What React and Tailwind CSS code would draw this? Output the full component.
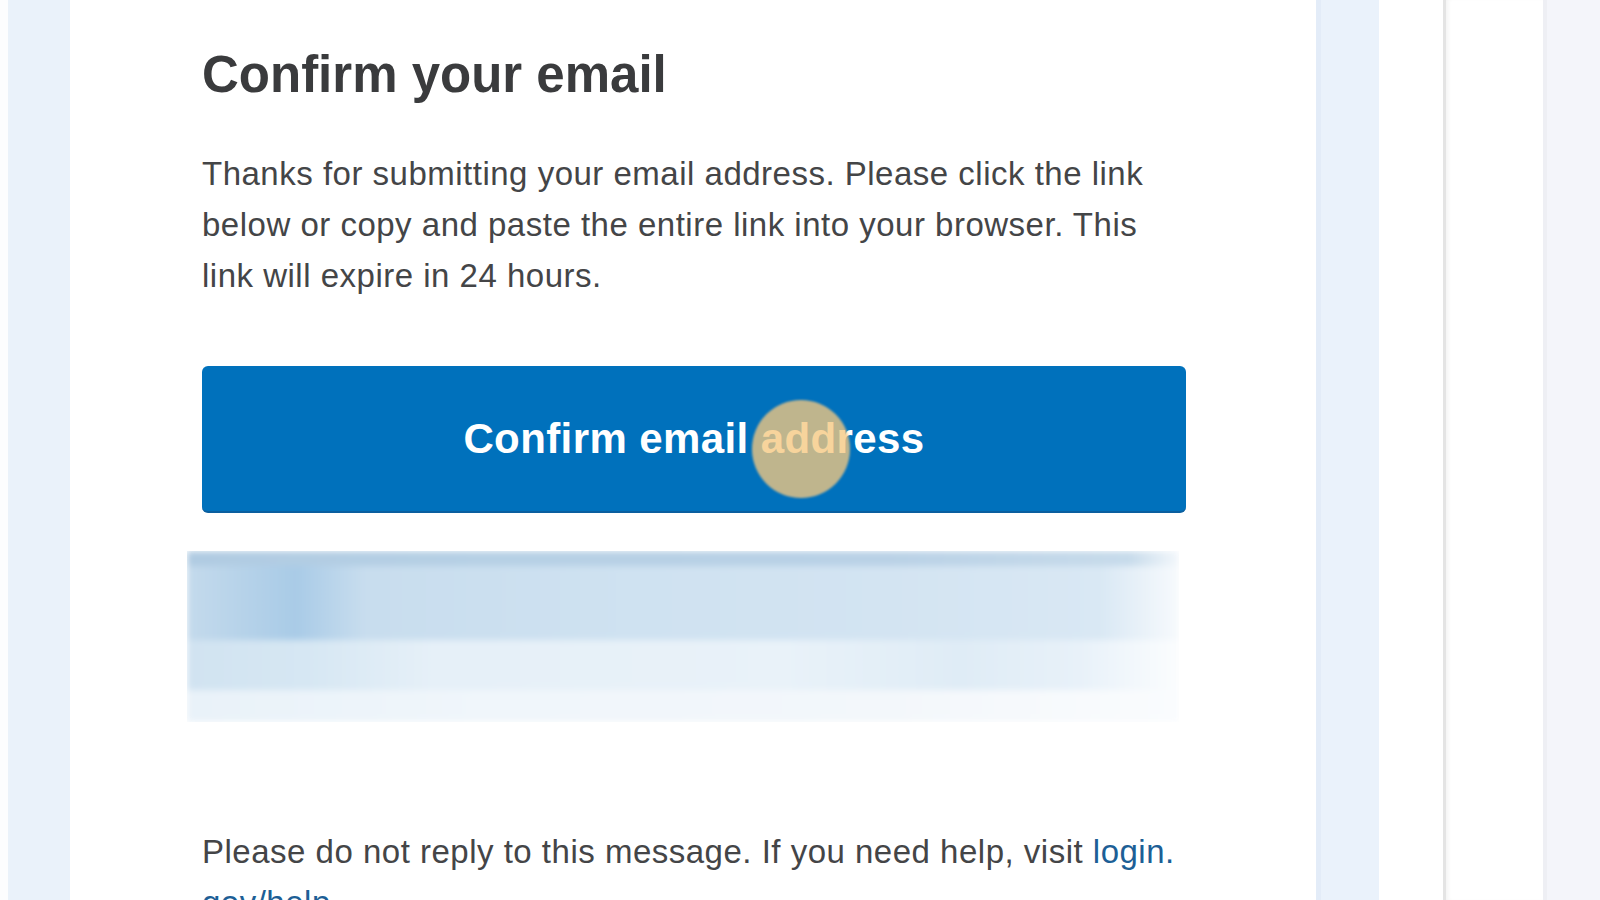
import React from "react";

const sans = "font-['Liberation_Sans',Arial,sans-serif]";

const Redacted = () => (
  <div className="w-[992px] h-[171px] -ml-[15px] mt-[38px] overflow-hidden">
    <div className="flex flex-col h-full blur-[3px]">
      <div className="h-[15px] bg-[linear-gradient(to_right,#b0cbe2,#b6d0e5_30%,#b9d1e6_70%,#c7dbeb_95%,#f4f8fc)]" />
      <div className="h-[74px] bg-[linear-gradient(to_right,#c4daec,#b0cfe8_8%,#a9cbe7_11%,#c8ddee_18%,#cfe2f1_45%,#d3e4f2_70%,#d9e8f4_92%,#f7fafd)]" />
      <div className="h-[50px] bg-[linear-gradient(to_right,#d1e3f1,#d6e7f3_12%,#e6f0f8_25%,#e9f2f9_60%,#dfecf6_78%,#e8f1f9_90%,#fbfdfe)]" />
      <div className="h-[32px] bg-[linear-gradient(to_right,#e9f2f9,#f0f6fb_30%,#f3f7fb_70%,#fafcfe)]" />
    </div>
  </div>
);

export default function App() {
  return (
    <div className={`flex h-[900px] w-[1600px] overflow-hidden bg-white ${sans}`}>
      <div className="w-[8px] bg-[#fcfdfe]" />
      <div className="w-[62px] bg-[#eaf2fa]" />

      {/* email card */}
      <div className="w-[1246px] bg-white pl-[132px] pt-[44px]">
        <div className="w-[985px]">
          <h1 className="text-[51px] leading-[61px] font-bold text-[#3a3b3d]">
            Confirm your email
          </h1>
          <p className="mt-[43px] text-[33px] leading-[51px] tracking-[0.5px] text-[#444547]">
            Thanks for submitting your email address. Please click the link
            below or copy and paste the entire link into your browser. This
            link will expire in 24 hours.
          </p>

          <div className="relative mt-[65px]">
            <button className="flex items-center justify-center w-[984px] h-[147px] rounded-[6px] bg-[#0071bc] border-b-2 border-[#0b5f9f] text-white text-[42px] font-bold tracking-[0.4px]">
              Confirm email address
            </button>
            {/* tap indicator */}
            <div className="absolute left-[550px] top-[34px] w-[98px] h-[98px] rounded-full bg-[rgba(245,200,128,0.78)] blur-[1px]" />
          </div>

          <Redacted />

          <p className="mt-[104px] text-[33px] leading-[51px] tracking-[0.5px] text-[#444547]">
            Please do not reply to this message. If you need help, visit{" "}
            <a className="text-[#1d5f96]">
              login.<wbr />gov/help
            </a>
            .
          </p>
        </div>
      </div>

      <div className="w-[63px] bg-[#eaf2fb] border-l-[5px] border-[#e3ecf8]" />
      <div className="w-[64px] bg-white" />
      <div className="w-[100px] bg-white border-l-[3px] border-[#e4e4e4] shadow-[inset_4px_0_4px_-2px_rgba(0,0,0,0.05)]" />
      <div className="flex-1 bg-[#f4f5fa] border-l-[4px] border-[#eeeff4]" />
    </div>
  );
}
